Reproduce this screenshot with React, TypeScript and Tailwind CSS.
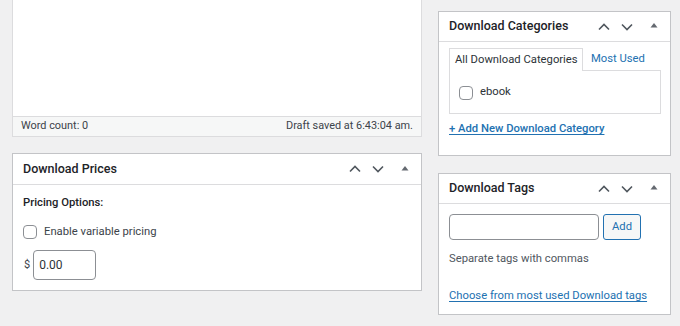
import React from "react";

const font = { fontFamily: "Roboto, 'Noto Sans', 'Liberation Sans', sans-serif" };

function HeaderIcons() {
  return (
    <div className="flex items-center">
      <svg width="14" height="10" viewBox="0 0 14 10">
        <path d="M2 7.5 L7 2.5 L12 7.5" fill="none" stroke="#50575e" strokeWidth="1.6" />
      </svg>
      <svg width="14" height="10" viewBox="0 0 14 10" className="ml-[9px]">
        <path d="M2 2.5 L7 7.5 L12 2.5" fill="none" stroke="#50575e" strokeWidth="1.6" />
      </svg>
      <svg width="8" height="6" viewBox="0 0 8 6" className="ml-[16px] mb-[3px]">
        <path d="M0.5 5.5 L4 1 L7.5 5.5 Z" fill="#646970" />
      </svg>
    </div>
  );
}

function Box({ title, h, headerH, children }: { title: string; h: string; headerH: string; children: React.ReactNode }) {
  return (
    <div className={`bg-white border border-[#c3c4c7] ${h} flex flex-col`}>
      <div className={`${headerH} border-b border-[#dcdcde] flex items-center justify-between pl-[10px] pr-[12px] shrink-0`}>
        <span className="text-[12.5px] font-medium text-[#1d2327] whitespace-nowrap">{title}</span>
        <HeaderIcons />
      </div>
      {children}
    </div>
  );
}

function Checkbox() {
  return <span className="inline-block w-[14px] h-[14px] rounded-[4px] border border-[#8c8f94] bg-white shrink-0" />;
}

export default function App() {
  return (
    <div className="w-[680px] h-[326px] bg-[#f0f0f1] flex overflow-hidden whitespace-nowrap" style={font}>
      <div className="ml-[12px] w-[410px] flex flex-col">
        <div className="h-[137px] bg-white border-x border-b border-[#dcdcde] flex flex-col">
          <div className="flex-1" />
          <div className="h-[20px] bg-[#f6f7f7] border-t border-[#dcdcde] flex items-center justify-between px-[8px] text-[10.9px] text-[#3c434a]">
            <span>Word count: 0</span>
            <span>Draft saved at 6:43:04 am.</span>
          </div>
        </div>
        <div className="mt-[16px]">
          <Box title="Download Prices" h="h-[138px]" headerH="h-[31px]">
            <div className="px-[10px] pt-[10px] text-[11.25px] text-[#3c434a]">
              <div className="font-medium text-[#1d2327] leading-[16px]">Pricing Options:</div>
              <div className="flex items-center mt-[13px]">
                <Checkbox />
                <span className="ml-[7px]">Enable variable pricing</span>
              </div>
              <div className="flex items-center mt-[9px]">
                <span className="text-[11px] ml-[1px]">$</span>
                <div className="ml-[3px] w-[63px] h-[30px] border border-[#8c8f94] rounded-[4px] flex items-center px-[5px] text-[#2c3338] text-[12px]">0.00</div>
              </div>
            </div>
          </Box>
        </div>
      </div>
      <div className="ml-[16px] w-[233px] pt-[11px] flex flex-col">
        <Box title="Download Categories" h="h-[145px]" headerH="h-[30px]">
          <div className="pl-[10px] pr-[9px] pt-[6px] text-[11.25px]">
            <div className="flex items-end">
              <div className="h-[23px] w-[134px] border-x border-t border-[#dcdcde] bg-white flex items-center pl-[5px] text-[#2c3338] relative z-10 -mb-px">
                All Download Categories
              </div>
              <div className="h-[22px] flex items-center ml-[8px] text-[#2271b1]">Most Used</div>
            </div>
            <div className="h-[44px] border border-[#dcdcde] flex items-center pl-[9px] pt-[1px] text-[#2c3338]">
              <Checkbox />
              <span className="ml-[7px]">ebook</span>
            </div>
            <div className="mt-[7px] text-[#2271b1] underline underline-offset-2 font-medium">+ Add New Download Category</div>
          </div>
        </Box>
        <div className="mt-[17px]">
          <Box title="Download Tags" h="h-[142px]" headerH="h-[30px]">
            <div className="pl-[10px] pt-[10px] text-[11.25px] text-[#50575e]">
              <div className="flex">
                <div className="w-[150px] h-[26px] border border-[#8c8f94] rounded-[4px]" />
                <div className="ml-[4px] w-[38px] h-[26px] border border-[#2271b1] rounded-[3px] bg-[#f6f7f7] text-[#2271b1] flex items-center justify-center">Add</div>
              </div>
              <div className="mt-[11px] leading-[16px]">Separate tags with commas</div>
              <div className="mt-[21px] text-[#2271b1] underline underline-offset-2">Choose from most used Download tags</div>
            </div>
          </Box>
        </div>
      </div>
    </div>
  );
}
